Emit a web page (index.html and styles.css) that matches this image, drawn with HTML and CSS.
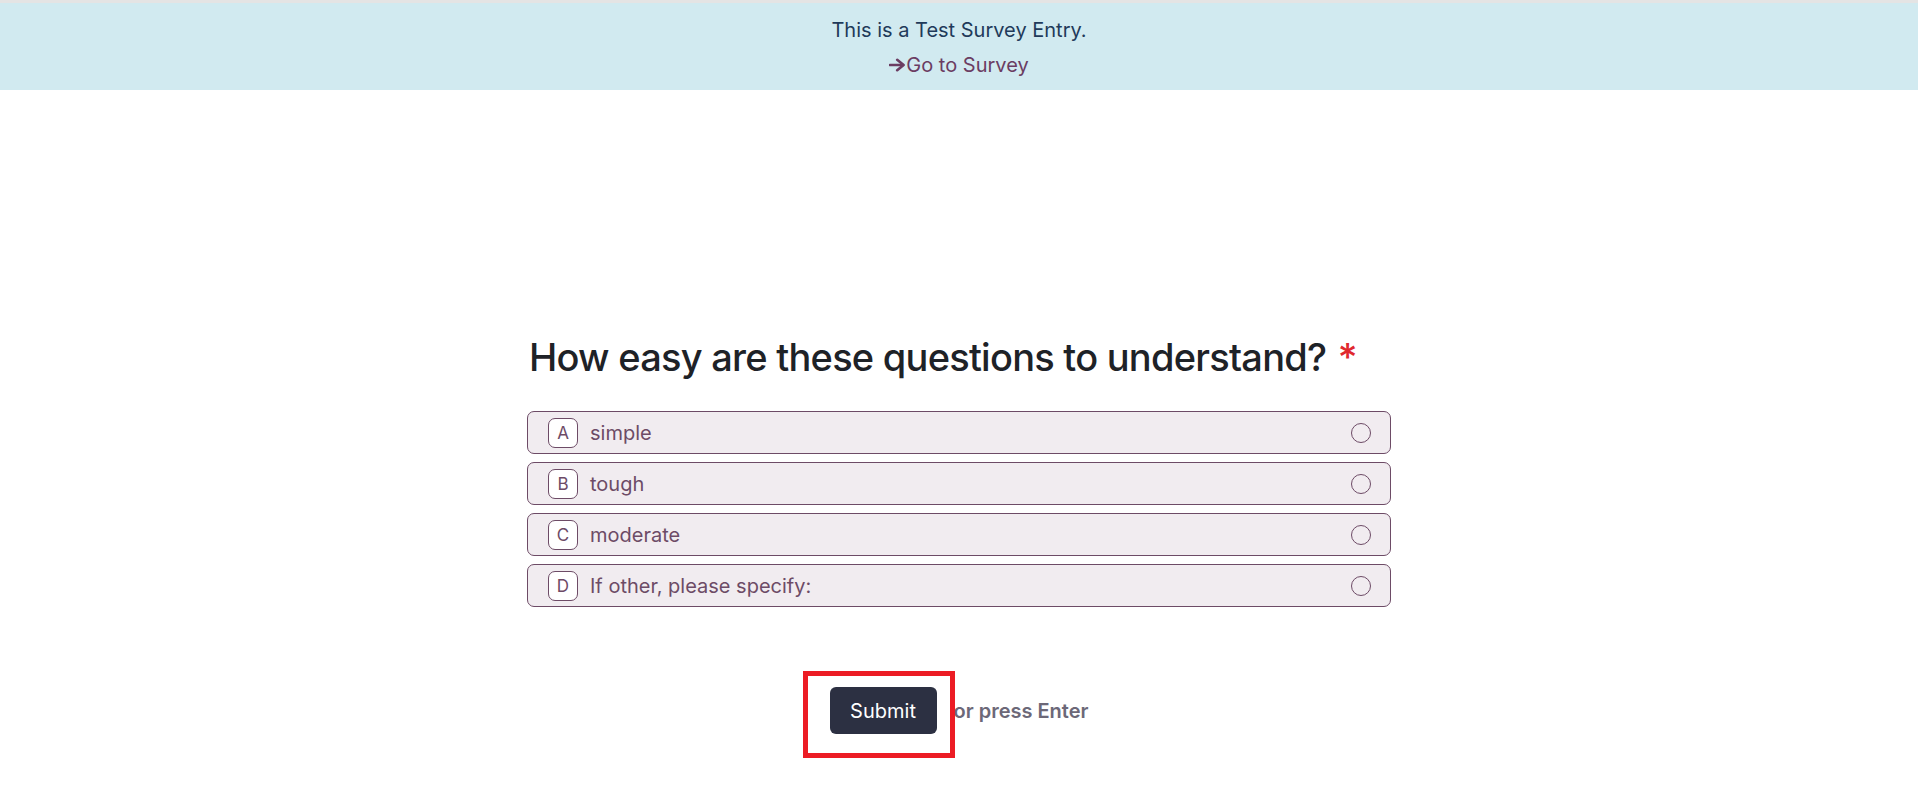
FILE: index.html
```html
<!DOCTYPE html>
<html lang="en">
<head>
<meta charset="utf-8">
<title>Test Survey</title>
<link rel="stylesheet" href="styles.css">
</head>
<body>
<div class="topline"></div>
<header class="banner">
  <div class="banner-text">This is a Test Survey Entry.</div>
  <a class="banner-link" href="#"><svg class="arrow" width="16" height="14" viewBox="0 0 16 14" aria-hidden="true"><path d="M1 7 H12" stroke="currentColor" stroke-width="2.6" stroke-linecap="round" fill="none"/><path d="M8.2 1.8 L14.6 7 L8.2 12.2" stroke="currentColor" stroke-width="2.6" stroke-linecap="round" stroke-linejoin="round" fill="none"/></svg>Go to Survey</a>
</header>
<main class="survey">
  <h1 class="question">How easy are these questions to understand? <span class="req">*</span></h1>
  <div class="options">
    <label class="option"><span class="key">A</span><span class="label">simple</span><span class="radio"></span></label>
    <label class="option"><span class="key">B</span><span class="label">tough</span><span class="radio"></span></label>
    <label class="option"><span class="key">C</span><span class="label">moderate</span><span class="radio"></span></label>
    <label class="option"><span class="key">D</span><span class="label">If other, please specify:</span><span class="radio"></span></label>
  </div>
  <div class="actions">
    <div class="submit-wrap">
      <button class="submit" type="button">Submit</button>
      <span class="highlight"></span>
    </div>
    <span class="hint">or press Enter</span>
  </div>
</main>
</body>
</html>
```

FILE: styles.css
```css
html, body {
  margin: 0;
  padding: 0;
  background: #ffffff;
  font-family: Inter, "Noto Sans", sans-serif;
}
.topline {
  height: 3px;
  background: #e4e4e4;
}
.banner {
  background: #d1eaf0;
  height: 87px;
  box-sizing: border-box;
  padding-top: 10px;
  display: flex;
  flex-direction: column;
  align-items: center;
}
.banner-text {
  font-size: 20px;
  line-height: 35px;
  color: #1f3a5a;
}
.banner-link {
  display: flex;
  align-items: center;
  font-size: 20px;
  line-height: 34px;
  color: #6b3d62;
  text-decoration: none;
}
.arrow {
  margin-right: 1px;
}
.survey {
  width: 864px;
  margin: 0 auto;
  padding: 244px 0 60px;
}
.question {
  margin: 0 0 31px 2px;
  font-size: 38px;
  line-height: 46px;
  font-weight: 500;
  letter-spacing: -0.75px;
  color: #1e2227;
}
.req {
  color: #e0282e;
  margin-left: 2px;
}
.options {
  display: flex;
  flex-direction: column;
  gap: 8px;
}
.option {
  display: flex;
  align-items: center;
  height: 43px;
  box-sizing: border-box;
  border: 1px solid #6d4b66;
  border-radius: 7px;
  background: #f1ecf0;
  padding: 0 19px 0 20px;
}
.key {
  width: 30px;
  height: 30px;
  box-sizing: border-box;
  border: 1px solid #6d4b66;
  border-radius: 7px;
  background: #ffffff;
  display: flex;
  align-items: center;
  justify-content: center;
  font-size: 17px;
  color: #6d4b66;
}
.label {
  flex: 1;
  margin-left: 12px;
  font-size: 20px;
  color: #6d4b66;
}
.radio {
  width: 20px;
  height: 20px;
  box-sizing: border-box;
  border: 1.5px solid #6d4b66;
  border-radius: 50%;
}
.actions {
  display: flex;
  align-items: center;
  justify-content: center;
  margin-top: 80px;
  gap: 17px;
}
.submit-wrap {
  position: relative;
}
.submit {
  display: block;
  width: 107px;
  height: 47px;
  border: 0;
  border-radius: 6px;
  background: #2c3042;
  color: #ffffff;
  font-family: Inter, "Noto Sans", sans-serif;
  font-size: 20px;
  font-weight: 400;
}
.highlight {
  position: absolute;
  left: -27px;
  top: -16px;
  width: 152px;
  height: 87px;
  box-sizing: border-box;
  border: 5px solid #ec1c24;
}
.hint {
  font-size: 20px;
  font-weight: 600;
  color: #6c6878;
}
```
